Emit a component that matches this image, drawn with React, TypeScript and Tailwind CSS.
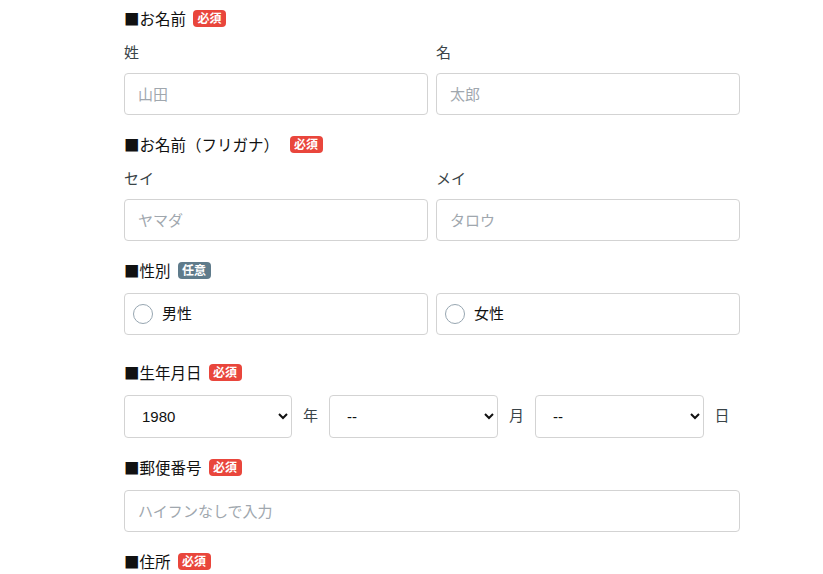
const font = { fontFamily: '"Liberation Sans", "Noto Sans CJK JP", sans-serif' };
const cjk = { fontFamily: '"Noto Sans CJK JP", sans-serif' };

function Badge({ kind }: { kind: "req" | "opt" }) {
  return (
    <span
      className={`ml-[7px] inline-flex h-[17px] items-center rounded-[4px] px-[4.5px] text-[12px] font-bold leading-none text-white ${
        kind === "req" ? "bg-[#e9463c]" : "bg-[#5f7b8b]"
      }`}
    >
      {kind === "req" ? "必須" : "任意"}
    </span>
  );
}

function Heading({ children, kind }: { children: React.ReactNode; kind: "req" | "opt" }) {
  return (
    <div className="flex h-[22px] items-center text-[15.5px] leading-[22px] text-[#111]" style={cjk}>
      <span className="whitespace-pre">■{children}</span>
      <Badge kind={kind} />
    </div>
  );
}

function TextInput({ placeholder }: { placeholder: string }) {
  return (
    <input
      className="h-[42px] w-full rounded-[4px] border border-[#d3d3d3] bg-white px-[13px] text-[15px] text-[#333] outline-none placeholder:text-[#a0a7ae]"
      placeholder={placeholder}
    />
  );
}

function LabeledInput({ label, placeholder }: { label: string; placeholder: string }) {
  return (
    <div className="flex flex-col">
      <div className="mb-[10px] h-[20px] text-[15px] leading-[20px] text-[#3a4448]">{label}</div>
      <TextInput placeholder={placeholder} />
    </div>
  );
}

function Radio({ label }: { label: string }) {
  return (
    <label className="flex h-[42px] items-center rounded-[4px] border border-[#d3d3d3] bg-white pl-[8px] text-[15px] text-[#111]">
      <span className="mr-[9px] h-[20px] w-[20px] rounded-full border border-[#97a6b1] bg-white" />
      {label}
    </label>
  );
}

function Select({ value, className }: { value: string; className: string }) {
  return (
    <select
      defaultValue={value}
      className={`h-[43px] rounded-[4px] border border-[#d3d3d3] bg-white pl-[13px] pr-[6px] text-[15px] text-[#111] outline-none ${className}`}
    >
      <option value={value}>{value}</option>
    </select>
  );
}

export default function App() {
  return (
    <div className="min-h-[574px] bg-white" style={font}>
      <div className="ml-[124px] w-[616px] pt-[7px]">
        <Heading kind="req">お名前</Heading>
        <div className="mt-[14px] grid grid-cols-2 gap-[8px]">
          <LabeledInput label="姓" placeholder="山田" />
          <LabeledInput label="名" placeholder="太郎" />
        </div>

        <div className="mt-[18px]">
          <Heading kind="req">お名前（フリガナ） </Heading>
        </div>
        <div className="mt-[14px] grid grid-cols-2 gap-[8px]">
          <LabeledInput label="セイ" placeholder="ヤマダ" />
          <LabeledInput label="メイ" placeholder="タロウ" />
        </div>

        <div className="mt-[18px]">
          <Heading kind="opt">性別</Heading>
        </div>
        <div className="mt-[12px] grid grid-cols-2 gap-[8px]">
          <Radio label="男性" />
          <Radio label="女性" />
        </div>

        <div className="mt-[26px]">
          <Heading kind="req">生年月日</Heading>
        </div>
        <div className="mt-[12px] flex items-center text-[15px] text-[#3a4448]">
          <Select value="1980" className="w-[168px]" />
          <span className="w-[37px] text-center">年</span>
          <Select value="--" className="w-[169px]" />
          <span className="w-[37px] text-center">月</span>
          <Select value="--" className="w-[169px]" />
          <span className="w-[36px] text-center">日</span>
        </div>

        <div className="mt-[18px]">
          <Heading kind="req">郵便番号</Heading>
        </div>
        <div className="mt-[12px]">
          <TextInput placeholder="ハイフンなしで入力" />
        </div>

        <div className="mt-[18px]">
          <Heading kind="req">住所</Heading>
        </div>
      </div>
    </div>
  );
}
